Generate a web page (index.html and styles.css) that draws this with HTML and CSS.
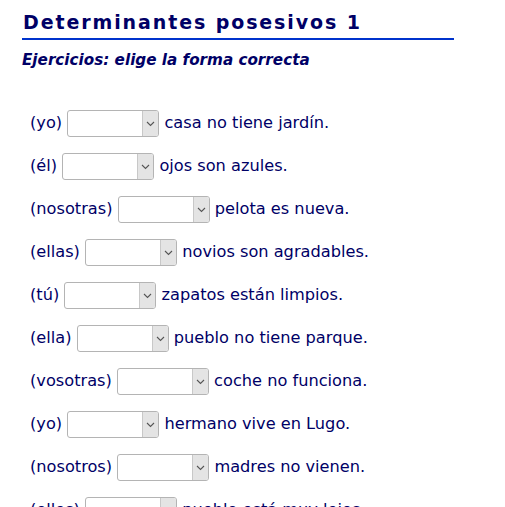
FILE: index.html
```html
<!DOCTYPE html>
<html lang="es">
<head>
    <meta charset="UTF-8">
    <title>Determinantes posesivos 1</title>
    <link rel="stylesheet" href="styles.css">
</head>
<body>
<div class="page">
    <h1>Determinantes posesivos 1</h1>
    <h2>Ejercicios: elige la forma correcta</h2>

    <div class="ejercicios">
        <p>(yo) <span class="pick"><select><option></option><option>mi</option><option>mis</option></select><span class="arrow"><svg width="9" height="6" viewBox="0 0 9 6"><path d="M1 1 L4.5 4.5 L8 1" fill="none" stroke="#555" stroke-width="1.1"/></svg></span></span> casa no tiene jardín.</p>
        <p>(él) <span class="pick"><select><option></option><option>su</option><option>sus</option></select><span class="arrow"><svg width="9" height="6" viewBox="0 0 9 6"><path d="M1 1 L4.5 4.5 L8 1" fill="none" stroke="#555" stroke-width="1.1"/></svg></span></span> ojos son azules.</p>
        <p>(nosotras) <span class="pick"><select><option></option><option>nuestra</option><option>nuestras</option></select><span class="arrow"><svg width="9" height="6" viewBox="0 0 9 6"><path d="M1 1 L4.5 4.5 L8 1" fill="none" stroke="#555" stroke-width="1.1"/></svg></span></span> pelota es nueva.</p>
        <p>(ellas) <span class="pick"><select><option></option><option>su</option><option>sus</option></select><span class="arrow"><svg width="9" height="6" viewBox="0 0 9 6"><path d="M1 1 L4.5 4.5 L8 1" fill="none" stroke="#555" stroke-width="1.1"/></svg></span></span> novios son agradables.</p>
        <p>(tú) <span class="pick"><select><option></option><option>tu</option><option>tus</option></select><span class="arrow"><svg width="9" height="6" viewBox="0 0 9 6"><path d="M1 1 L4.5 4.5 L8 1" fill="none" stroke="#555" stroke-width="1.1"/></svg></span></span> zapatos están limpios.</p>
        <p>(ella) <span class="pick"><select><option></option><option>su</option><option>sus</option></select><span class="arrow"><svg width="9" height="6" viewBox="0 0 9 6"><path d="M1 1 L4.5 4.5 L8 1" fill="none" stroke="#555" stroke-width="1.1"/></svg></span></span> pueblo no tiene parque.</p>
        <p>(vosotras) <span class="pick"><select><option></option><option>vuestro</option><option>vuestros</option></select><span class="arrow"><svg width="9" height="6" viewBox="0 0 9 6"><path d="M1 1 L4.5 4.5 L8 1" fill="none" stroke="#555" stroke-width="1.1"/></svg></span></span> coche no funciona.</p>
        <p>(yo) <span class="pick"><select><option></option><option>mi</option><option>mis</option></select><span class="arrow"><svg width="9" height="6" viewBox="0 0 9 6"><path d="M1 1 L4.5 4.5 L8 1" fill="none" stroke="#555" stroke-width="1.1"/></svg></span></span> hermano vive en Lugo.</p>
        <p>(nosotros) <span class="pick"><select><option></option><option>nuestras</option><option>nuestros</option></select><span class="arrow"><svg width="9" height="6" viewBox="0 0 9 6"><path d="M1 1 L4.5 4.5 L8 1" fill="none" stroke="#555" stroke-width="1.1"/></svg></span></span> madres no vienen.</p>
        <p>(ellos) <span class="pick"><select><option></option><option>su</option><option>sus</option></select><span class="arrow"><svg width="9" height="6" viewBox="0 0 9 6"><path d="M1 1 L4.5 4.5 L8 1" fill="none" stroke="#555" stroke-width="1.1"/></svg></span></span> pueblo está muy lejos.</p>
    </div>
</div>
</body>
</html>
```

FILE: styles.css
```css
body {
    margin: 0;
    font-family: "DejaVu Sans", Verdana, sans-serif;
    color: #000066;
    background: #fff;
}
.page {
    padding: 10px 0 0 22px;
}
h1 {
    width: 431px;
    margin: 0;
    padding-bottom: 4px;
    border-bottom: 2px solid #0033cc;
    font-size: 19px;
    letter-spacing: 1.9px;
    line-height: 24px;
    padding-left: 1px;
}
h2 {
    margin: 10px 0 0 0;
    font-size: 15.2px;
    font-style: italic;
    line-height: 20px;
}
.ejercicios {
    margin-top: 31px;
    padding-left: 8px;
}
.ejercicios p {
    margin: 0;
    font-size: 16.2px;
    line-height: 43px;
}
.pick {
    position: relative;
    display: inline-block;
    vertical-align: middle;
}
.pick select {
    display: block;
    width: 92px;
    height: 27px;
    appearance: none;
    -webkit-appearance: none;
    border: 1px solid #b4b4b4;
    border-radius: 3px;
    background: #fff;
    font-size: 14px;
}
.arrow {
    position: absolute;
    top: 1px;
    right: 1px;
    bottom: 1px;
    width: 15px;
    background: #e4e4e4;
    border-left: 1px solid #c8c8c8;
    border-radius: 0 2px 2px 0;
    display: flex;
    align-items: center;
    justify-content: center;
    pointer-events: none;
}
```
